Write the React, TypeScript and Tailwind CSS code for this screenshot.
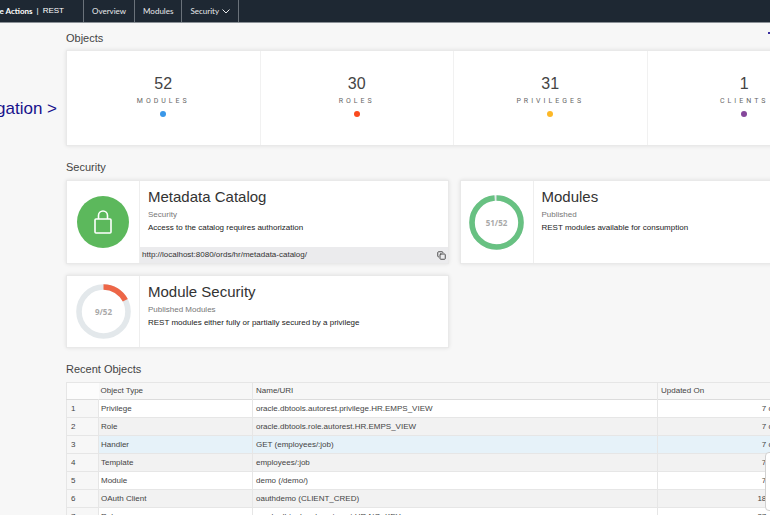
import { useState } from "react";
import { Copy } from "lucide-react";

const stats = [
  { value: 52, label: "Modules", dot: "bg-[#3a97e8]" },
  { value: 30, label: "Roles", dot: "bg-[#fa4a1e]" },
  { value: 31, label: "Privileges", dot: "bg-[#fdb827]" },
  { value: 1, label: "Clients", dot: "bg-[#85479b]" },
];

const recent = [
  { type: "Privilege", name: "oracle.dbtools.autorest.privilege.HR.EMPS_VIEW", updated: "7 days ago" },
  { type: "Role", name: "oracle.dbtools.role.autorest.HR.EMPS_VIEW", updated: "7 days ago" },
  { type: "Handler", name: "GET (employees/:job)", updated: "7 days ago" },
  { type: "Template", name: "employees/:job", updated: "7 days ago" },
  { type: "Module", name: "demo (/demo/)", updated: "7 days ago" },
  { type: "OAuth Client", name: "oauthdemo (CLIENT_CRED)", updated: "18 days ago" },
  { type: "Role", name: "oracle.dbtools.role.autorest.HR.NO_KEY", updated: "27 days ago" },
];

const cardClass = "flex bg-white border border-[#e9e9e9] shadow-[0_0_4px_rgba(0,0,0,0.1)]";

function Ring({ value, total, color }: { value: number; total: number; color: string }) {
  const length = 2 * Math.PI * 24.5;
  return (
    <svg viewBox="0 0 55 55" className="w-[55px] h-[55px]" role="img" aria-label={`${value} of ${total}`}>
      <circle cx="27.5" cy="27.5" r="24.5" fill="none" stroke="#e3e8eb" strokeWidth="5.6" />
      <circle
        cx="27.5"
        cy="27.5"
        r="24.5"
        fill="none"
        stroke={color}
        strokeWidth="5.6"
        strokeDasharray={`${(length * value) / total} ${length}`}
        transform="rotate(-90 27.5 27.5)"
      />
      <text x="27.5" y="30.5" textAnchor="middle" fontSize="8" fontWeight="700" fill="#a9a9a9" fontFamily="Open Sans, sans-serif">
        {value}/{total}
      </text>
    </svg>
  );
}

function CardText({ title, subtitle, text }: { title: string; subtitle: string; text: string }) {
  return (
    <div className="px-2 pt-[5px]">
      <h3 className="text-[15px] leading-[22px] text-[#333]">{title}</h3>
      <p className="text-[8px] leading-[13px] text-[#777]">{subtitle}</p>
      <p className="text-[8px] leading-[13px] text-[#222]">{text}</p>
    </div>
  );
}

export default function App() {
  const [selected, setSelected] = useState(2);

  return (
    <div className="relative h-screen overflow-hidden bg-[#f7f7f7] font-['Liberation_Sans',Arial,sans-serif] text-[#444]">
      <header className="flex h-[23px] items-stretch border-b border-[#8b9197] bg-[#1e2833] text-[8px] text-[#e8eaec]">
        <div className="flex w-[83px] items-center justify-end whitespace-nowrap pr-[19px] text-white">
          <span className="font-bold font-[Lato,sans-serif]">Database Actions</span>
          <span className="px-1">|</span>
          <span>REST</span>
        </div>
        <nav className="flex font-[Lato,sans-serif]">
          <a href="#overview" className="flex items-center border-l border-[#6a727a] px-2">Overview</a>
          <a href="#modules" className="flex items-center border-l border-[#6a727a] px-2">Modules</a>
          <button type="button" className="flex items-center gap-[3px] border-x border-[#6a727a] px-2">
            Security
            <svg viewBox="0 0 8 5" className="h-[5px] w-2" fill="none" stroke="currentColor" strokeWidth="1">
              <path d="M0.5 0.5L4 4L7.5 0.5" />
            </svg>
          </button>
        </nav>
      </header>

      {/* Callouts laid over the page */}
      <p className="absolute right-[calc(100%-57px)] top-[98px] whitespace-nowrap text-[17px] leading-[22px] text-[#17128c]">Navigation &gt;</p>
      <span className="absolute left-[768px] top-[32px] h-[2px] w-2 bg-[#3a2fa0]" />

      <main className="-mr-[72px] ml-[66px]">
        <h2 className="pt-2 text-[11px] leading-[15px]">Objects</h2>
        <section className="mt-1 grid grid-cols-4 border border-[#e9e9e9] bg-white shadow-[0_0_4px_rgba(0,0,0,0.1)]">
          {stats.map((s) => (
            <div key={s.label} className="flex h-[94px] flex-col items-center border-r border-[#f1f1f1] pt-[23px] last:border-r-0">
              <span className="text-[16px] leading-5 text-[#444]">{s.value}</span>
              <span className="mt-[2px] font-[Roboto,Arial,sans-serif] text-[7px] leading-[10px] tracking-[3px] uppercase text-[#666]">{s.label}</span>
              <span className={`mt-[5px] h-[6px] w-[6px] rounded-full ${s.dot}`} />
            </div>
          ))}
        </section>

        <h2 className="mt-[14px] text-[11px] leading-[15px]">Security</h2>
        <section className="mt-[5px] grid grid-cols-2 gap-[11px]">
          <article className={cardClass}>
            <div className="flex w-[73px] shrink-0 items-center justify-center border-r border-[#eee]">
              <div className="flex h-[52px] w-[52px] items-center justify-center rounded-full bg-[#5cb85c]">
                <svg viewBox="0 0 18 24" className="h-6 w-[18px]" fill="none" stroke="#fff" strokeWidth="1.6">
                  <rect x="1" y="9" width="16" height="14" rx="1" />
                  <path d="M4.5 9V5.5a4.5 4.5 0 0 1 9 0V9" />
                </svg>
              </div>
            </div>
            <div className="flex min-w-0 flex-1 flex-col">
              <CardText title="Metadata Catalog" subtitle="Security" text="Access to the catalog requires authorization" />
              <div className="mt-[13px] flex h-4 items-center justify-between bg-[#ebebed] px-[2px] text-[8px] text-[#333]">
                <span>http://localhost:8080/ords/hr/metadata-catalog/</span>
                <button type="button" aria-label="Copy URL">
                  <Copy className="h-[9px] w-[9px] text-[#444]" strokeWidth={2.5} />
                </button>
              </div>
            </div>
          </article>
          <article className={cardClass}>
            <div className="flex w-[73px] shrink-0 items-center justify-center border-r border-[#eee]">
              <Ring value={51} total={52} color="#68c182" />
            </div>
            <CardText title="Modules" subtitle="Published" text="REST modules available for consumption" />
          </article>
          <article className={`${cardClass} h-[73px]`}>
            <div className="flex w-[73px] shrink-0 items-center justify-center border-r border-[#eee]">
              <Ring value={9} total={52} color="#ed6647" />
            </div>
            <CardText title="Module Security" subtitle="Published Modules" text="REST modules either fully or partially secured by a privilege" />
          </article>
        </section>

        <h2 className="mt-[14px] text-[11px] leading-[15px]">Recent Objects</h2>
        <table className="mt-[5px] w-full table-fixed border-collapse text-[8px] leading-3">
          <thead>
            <tr className="h-[17px] border border-[#e6e6e6] border-b-[#dcdcdc] text-left">
              <th className="w-[32px] bg-[#fcfcfc]" />
              <th className="w-[154px] border-r border-[#e6e6e6] p-0 pl-[2px] font-normal">Object Type</th>
              <th className="border-r border-[#e6e6e6] p-0 pl-[3px] font-normal">Name/URI</th>
              <th className="w-[184px] p-0 pl-[3px] font-normal">Updated On</th>
            </tr>
          </thead>
          <tbody>
            {recent.map((r, i) => (
              <tr
                key={i}
                onClick={() => setSelected(i)}
                className={`h-[18px] border border-[#e6e6e6] ${selected === i ? "bg-[#e6f2f9]" : i % 2 ? "bg-[#f2f2f2]" : "bg-white"}`}
              >
                <td className="border-r border-[#e6e6e6] bg-[#f7f7f7] p-0 pl-1">{i + 1}</td>
                <td className="border-r border-[#e6e6e6] p-0 pl-[2px]">{r.type}</td>
                <td className="border-r border-[#e6e6e6] p-0 pl-[3px]">{r.name}</td>
                <td className="p-0 pr-10 text-right whitespace-nowrap">{r.updated}</td>
              </tr>
            ))}
          </tbody>
        </table>
      </main>

      <div className="absolute left-[765px] top-[452px] h-[59px] w-40 rounded-sm border border-[#d0d0d0] bg-white" />
    </div>
  );
}
